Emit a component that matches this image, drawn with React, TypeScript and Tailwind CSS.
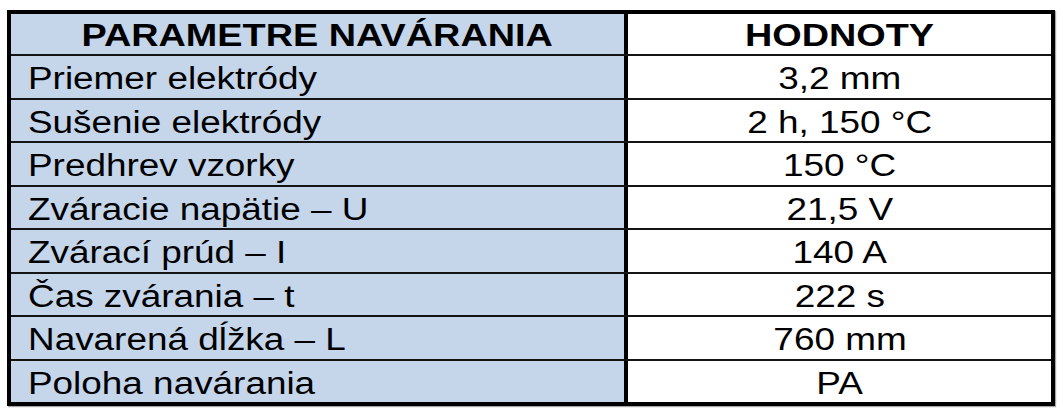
const rows: [string, string][] = [
  ["Priemer elektródy", "3,2 mm"],
  ["Sušenie elektródy", "2 h, 150 °C"],
  ["Predhrev vzorky", "150 °C"],
  ["Zváracie napätie – U", "21,5 V"],
  ["Zvárací prúd – I", "140 A"],
  ["Čas zvárania – t", "222 s"],
  ["Navarená dĺžka – L", "760 mm"],
  ["Poloha navárania", "PA"],
];

export default function App() {
  return (
    <div className="w-[1063px] h-[413px] bg-white pt-[10px] pl-[7px] font-['Liberation_Sans',Arial,sans-serif] text-black">
      <div className="w-[1048px] border-4 border-black shadow-[1px_1px_1px_rgba(0,0,0,0.35)]">
        <div className="flex h-[40px]">
          <div className="w-[617px] bg-[#c5d5ea] border-r-4 border-black flex items-center justify-center pt-[2px]">
            <span className="inline-block text-[31px] font-bold leading-none scale-x-[1.22]">
              PARAMETRE NAVÁRANIA
            </span>
          </div>
          <div className="flex-1 flex items-center justify-center pt-[2px]">
            <span className="inline-block text-[31px] font-bold leading-none scale-x-[1.22]">
              HODNOTY
            </span>
          </div>
        </div>
        {rows.map(([label, value]) => (
          <div key={label} className="flex h-[43.5px] border-t-2 border-[#141414]">
            <div className="w-[617px] bg-[#c5d5ea] border-r-4 border-black flex items-center pl-[17px] pt-[4px]">
              <span className="inline-block text-[31px] leading-none origin-left scale-x-[1.19]">
                {label}
              </span>
            </div>
            <div className="flex-1 flex items-center justify-center pt-[4px]">
              <span className="inline-block text-[31px] leading-none scale-x-[1.19]">
                {value}
              </span>
            </div>
          </div>
        ))}
      </div>
    </div>
  );
}
